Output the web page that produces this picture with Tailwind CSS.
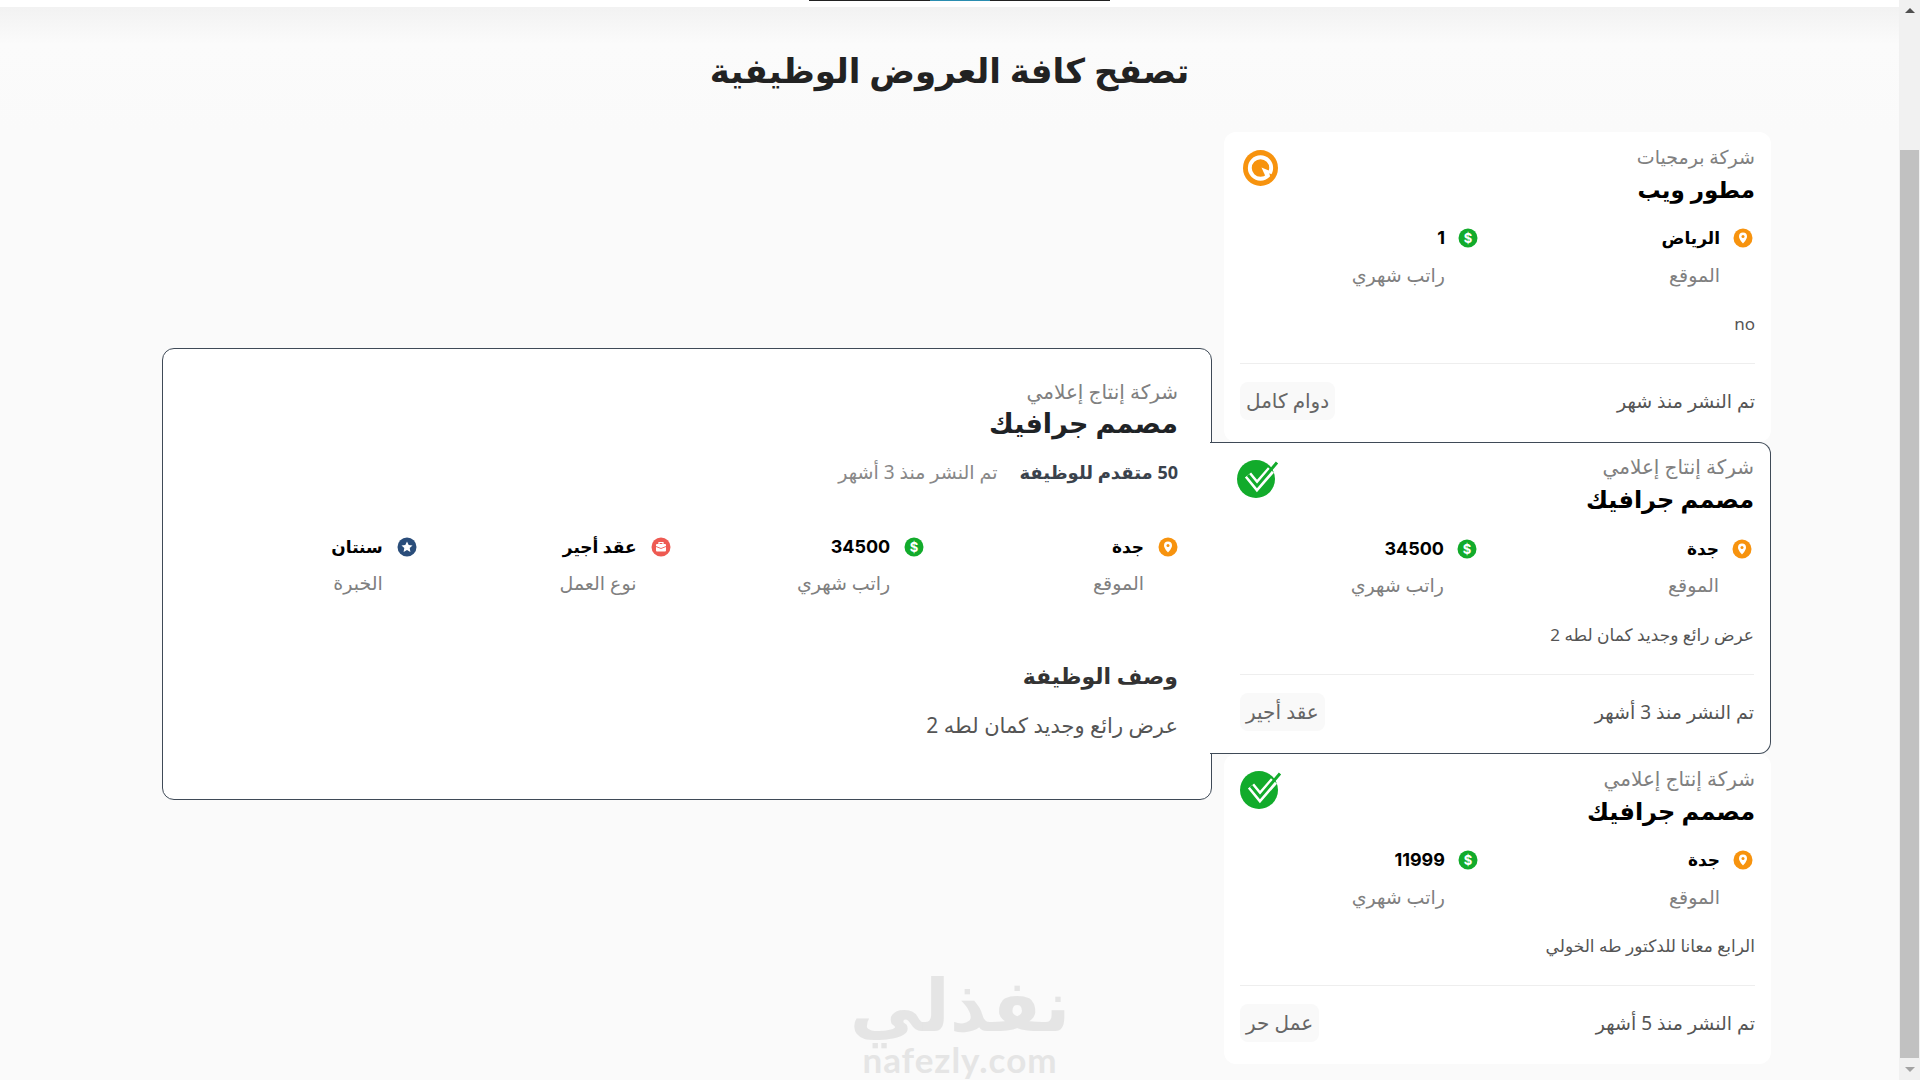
<!DOCTYPE html>
<html lang="ar" dir="rtl">
<head>
<meta charset="utf-8">
<script src="https://cdn.jsdelivr.net/npm/@tailwindcss/browser@4"></script>
</head>
<body class="m-0 h-[1080px] overflow-hidden bg-[#fafafa] font-['Noto_Sans','DejaVu_Sans',sans-serif]">
<div dir="ltr" class="flex h-[1080px] overflow-hidden">
  <div dir="rtl" class="relative flex h-[1080px] w-[1899px] flex-col overflow-hidden">
    <div class="relative h-[7px] shrink-0 bg-white">
      <div class="absolute left-[809px] top-0 flex h-px w-[301px]">
        <div class="flex-1 bg-[#222]"></div><div class="w-[60px] bg-[#2a8db0]"></div><div class="flex-1 bg-[#222]"></div>
      </div>
    </div>
    <div class="h-[125px] shrink-0 bg-gradient-to-b from-[#f2f2f2] via-[#fbfbfb] via-30% to-[#fafafa]">
      <h1 class="pt-[38px] text-center text-[34px] font-bold leading-[50px] text-[#222]">تصفح كافة العروض الوظيفية</h1>
    </div>

    <div class="absolute left-[760px] top-[967px] flex w-[400px] flex-col items-center text-[#e5e5e5]">
      <div class="h-[72px] text-[72px] font-bold leading-[72px]">نفذلي</div>
      <div dir="ltr" class="h-[40px] font-['Lato',sans-serif] text-[35px] font-bold leading-[40px] tracking-[1px]">nafezly.com</div>
    </div>

    <div class="relative flex flex-1 items-start">
      <!-- job cards column -->
      <div class="mr-[128px] flex w-[547px] shrink-0 flex-col">
        <!-- card 1 -->
        <div class="relative h-[310px] rounded-xl bg-white px-4 pt-[13px]">
          <div class="flex items-start justify-between">
            <div>
              <div class="text-[19px] leading-[24px] text-[#808080]">شركة برمجيات</div>
              <div class="mt-[2px] text-[23px] font-bold leading-[36px] text-black">مطور ويب</div>
            </div>
            <svg class="ml-[3px] mt-[5px] h-[36px] w-[35px]" viewBox="0 0 36 37"><ellipse cx="18" cy="18.5" rx="18" ry="18.5" fill="#f7930e"/><circle cx="18" cy="18.5" r="11" fill="none" stroke="#fff" stroke-width="4"/><path d="M19 18l10 4-5 7z" fill="#fff"/><path d="M27 24l5 2-3 5z" fill="#f7930e"/></svg>
          </div>
          <div class="mt-[18px] grid grid-cols-[275px_1fr] pr-[2px]">
            <div>
              <div class="flex items-center gap-[13px]">
                <svg class="h-5 w-5" viewBox="0 0 20 20"><circle cx="10" cy="10" r="9.5" fill="#f7930e"/><path d="M10 4.5a4 4 0 0 0-4 4c0 3 4 7 4 7s4-4 4-7a4 4 0 0 0-4-4z" fill="#fff"/><circle cx="10" cy="8.5" r="1.5" fill="#f7930e"/></svg>
                <span class="text-[17px] font-bold leading-[26px] text-black">الرياض</span>
              </div>
              <div class="mr-[33px] mt-[12px] text-[19px] leading-[24px] text-[#808080]">الموقع</div>
            </div>
            <div>
              <div class="flex items-center gap-[13px]">
                <svg class="h-5 w-5" viewBox="0 0 20 20"><circle cx="10" cy="10" r="9.5" fill="#12ab2b"/><text x="10" y="14.5" text-anchor="middle" font-size="13" font-weight="700" fill="#fff" font-family="Inter">$</text></svg>
                <span class="font-['Inter'] text-[18px] font-bold leading-[26px] text-black">1</span>
              </div>
              <div class="mr-[33px] mt-[12px] text-[19px] leading-[24px] text-[#808080]">راتب شهري</div>
            </div>
          </div>
          <div class="mt-[25px] text-[17px] leading-[24px] text-[#555]">no</div>
          <div class="mt-[27px] border-t border-[#eee]"></div>
          <div class="mt-[18px] flex items-center justify-between">
            <span class="text-[19px] leading-[24px] text-[#555]">تم النشر منذ شهر</span>
            <span class="flex h-[38px] items-center rounded-lg bg-[#f9f9f9] px-[6px] text-[20px] text-[#666]">دوام كامل</span>
          </div>
        </div>
        <!-- card 2 selected -->
        <div class="relative z-10 ml-[-14px] h-[312px] rounded-r-xl border border-l-0 border-[#3f4a57] bg-white pl-[30px] pr-4 pt-[12px]">
          <div class="flex items-start justify-between">
            <div>
              <div class="text-[20px] leading-[24px] text-[#808080]">شركة إنتاج إعلامي</div>
              <div class="mt-[2px] text-[24px] font-bold leading-[36px] text-black">مصمم جرافيك</div>
            </div>
            <svg class="ml-[-3px] mt-[5px] h-[38px] w-[42px]" viewBox="0 0 42 38"><circle cx="19" cy="19" r="19" fill="#12ab2b"/><path d="M11 15l9 11 14-16" fill="none" stroke="#fff" stroke-width="8"/><path d="M11 15l9 11L40 2.5" fill="none" stroke="#12ab2b" stroke-width="3"/></svg>
          </div>
          <div class="mt-[19px] grid grid-cols-[275px_1fr] pr-[2px]">
            <div>
              <div class="flex items-center gap-[13px]">
                <svg class="h-5 w-5" viewBox="0 0 20 20"><circle cx="10" cy="10" r="9.5" fill="#f7930e"/><path d="M10 4.5a4 4 0 0 0-4 4c0 3 4 7 4 7s4-4 4-7a4 4 0 0 0-4-4z" fill="#fff"/><circle cx="10" cy="8.5" r="1.5" fill="#f7930e"/></svg>
                <span class="text-[17px] font-bold leading-[26px] text-black">جدة</span>
              </div>
              <div class="mr-[33px] mt-[11px] text-[19px] leading-[24px] text-[#808080]">الموقع</div>
            </div>
            <div>
              <div class="flex items-center gap-[13px]">
                <svg class="h-5 w-5" viewBox="0 0 20 20"><circle cx="10" cy="10" r="9.5" fill="#12ab2b"/><text x="10" y="14.5" text-anchor="middle" font-size="13" font-weight="700" fill="#fff" font-family="Inter">$</text></svg>
                <span class="font-['Inter'] text-[18px] font-bold leading-[26px] text-black">34500</span>
              </div>
              <div class="mr-[33px] mt-[11px] text-[19px] leading-[24px] text-[#808080]">راتب شهري</div>
            </div>
          </div>
          <div class="mt-[26px] text-[17px] leading-[24px] text-[#555]">عرض رائع وجديد كمان لطه 2</div>
          <div class="mt-[27px] border-t border-[#eee]"></div>
          <div class="mt-[18px] flex items-center justify-between">
            <span class="text-[19px] leading-[24px] text-[#555]">تم النشر منذ 3 أشهر</span>
            <span class="flex h-[38px] items-center rounded-lg bg-[#f9f9f9] px-[6px] text-[20px] text-[#666]">عقد أجير</span>
          </div>
        </div>
        <!-- card 3 -->
        <div class="relative h-[310px] rounded-xl bg-white px-4 pt-[13px]">
          <div class="flex items-start justify-between">
            <div>
              <div class="text-[20px] leading-[24px] text-[#808080]">شركة إنتاج إعلامي</div>
              <div class="mt-[2px] text-[24px] font-bold leading-[36px] text-black">مصمم جرافيك</div>
            </div>
            <svg class="mt-[4px] h-[38px] w-[42px]" viewBox="0 0 42 38"><circle cx="19" cy="19" r="19" fill="#12ab2b"/><path d="M11 15l9 11 14-16" fill="none" stroke="#fff" stroke-width="8"/><path d="M11 15l9 11L40 2.5" fill="none" stroke="#12ab2b" stroke-width="3"/></svg>
          </div>
          <div class="mt-[18px] grid grid-cols-[275px_1fr] pr-[2px]">
            <div>
              <div class="flex items-center gap-[13px]">
                <svg class="h-5 w-5" viewBox="0 0 20 20"><circle cx="10" cy="10" r="9.5" fill="#f7930e"/><path d="M10 4.5a4 4 0 0 0-4 4c0 3 4 7 4 7s4-4 4-7a4 4 0 0 0-4-4z" fill="#fff"/><circle cx="10" cy="8.5" r="1.5" fill="#f7930e"/></svg>
                <span class="text-[17px] font-bold leading-[26px] text-black">جدة</span>
              </div>
              <div class="mr-[33px] mt-[12px] text-[19px] leading-[24px] text-[#808080]">الموقع</div>
            </div>
            <div>
              <div class="flex items-center gap-[13px]">
                <svg class="h-5 w-5" viewBox="0 0 20 20"><circle cx="10" cy="10" r="9.5" fill="#12ab2b"/><text x="10" y="14.5" text-anchor="middle" font-size="13" font-weight="700" fill="#fff" font-family="Inter">$</text></svg>
                <span class="font-['Inter'] text-[18px] font-bold leading-[26px] text-black">11999</span>
              </div>
              <div class="mr-[33px] mt-[12px] text-[19px] leading-[24px] text-[#808080]">راتب شهري</div>
            </div>
          </div>
          <div class="mt-[25px] text-[17px] leading-[24px] text-[#555]">الرابع معانا للدكتور طه الخولي</div>
          <div class="mt-[27px] border-t border-[#eee]"></div>
          <div class="mt-[18px] flex items-center justify-between">
            <span class="text-[19px] leading-[24px] text-[#555]">تم النشر منذ 5 أشهر</span>
            <span class="flex h-[38px] items-center rounded-lg bg-[#f9f9f9] px-[6px] text-[20px] text-[#666]">عمل حر</span>
          </div>
        </div>
      </div>

      <!-- detail panel -->
      <div class="mr-[12px] mt-[216px] h-[452px] w-[1050px] shrink-0 rounded-xl border border-[#3f4a57] bg-white pr-[33px] pt-[31px]">
        <div class="text-[20px] leading-[24px] text-[#808080]">شركة إنتاج إعلامي</div>
        <div class="text-[27px] font-bold leading-[38px] text-[#1f2326]">مصمم جرافيك</div>
        <div class="mt-[18px] flex items-center gap-[22px]">
          <span class="text-[18px] font-bold leading-[24px] text-[#3a424c]">50 متقدم للوظيفة</span>
          <span class="text-[19px] leading-[24px] text-[#888]">تم النشر منذ 3 أشهر</span>
        </div>
        <div class="mt-[50px] grid grid-cols-4">
          <div>
            <div class="flex items-center gap-[14px]">
              <svg class="h-5 w-5" viewBox="0 0 20 20"><circle cx="10" cy="10" r="9.5" fill="#f7930e"/><path d="M10 4.5a4 4 0 0 0-4 4c0 3 4 7 4 7s4-4 4-7a4 4 0 0 0-4-4z" fill="#fff"/><circle cx="10" cy="8.5" r="1.5" fill="#f7930e"/></svg>
              <span class="text-[17px] font-bold leading-[26px] text-black">جدة</span>
            </div>
            <div class="mr-[34px] mt-[11px] text-[19px] leading-[24px] text-[#808080]">الموقع</div>
          </div>
          <div>
            <div class="flex items-center gap-[14px]">
              <svg class="h-5 w-5" viewBox="0 0 20 20"><circle cx="10" cy="10" r="9.5" fill="#12ab2b"/><text x="10" y="14.5" text-anchor="middle" font-size="13" font-weight="700" fill="#fff" font-family="Inter">$</text></svg>
              <span class="font-['Inter'] text-[18px] font-bold leading-[26px] text-black">34500</span>
            </div>
            <div class="mr-[34px] mt-[11px] text-[19px] leading-[24px] text-[#808080]">راتب شهري</div>
          </div>
          <div>
            <div class="flex items-center gap-[14px]">
              <svg class="h-5 w-5" viewBox="0 0 20 20"><circle cx="10" cy="10" r="9.5" fill="#ee5a52"/><rect x="5" y="7" width="10" height="7.5" rx="1" fill="#fff"/><path d="M8 7V5.5h4V7" fill="none" stroke="#fff" stroke-width="1.2"/><path d="M5 9.5l5 2 5-2" fill="none" stroke="#ee5a52" stroke-width=".9"/></svg>
              <span class="text-[17px] font-bold leading-[26px] text-black">عقد أجير</span>
            </div>
            <div class="mr-[34px] mt-[11px] text-[19px] leading-[24px] text-[#808080]">نوع العمل</div>
          </div>
          <div>
            <div class="flex items-center gap-[14px]">
              <svg class="h-5 w-5" viewBox="0 0 20 20"><circle cx="10" cy="10" r="9.5" fill="#2a4d7a"/><path d="M10 4.5l1.7 3.5 3.8.5-2.8 2.6.7 3.8-3.4-1.9-3.4 1.9.7-3.8L4.5 8.5l3.8-.5z" fill="#fff"/></svg>
              <span class="text-[17px] font-bold leading-[26px] text-black">سنتان</span>
            </div>
            <div class="mr-[34px] mt-[11px] text-[19px] leading-[24px] text-[#808080]">الخبرة</div>
          </div>
        </div>
        <div class="mt-[65px] text-[22px] font-bold leading-[30px] text-[#333]">وصف الوظيفة</div>
        <div class="mt-[20px] text-[21px] leading-[30px] text-[#555]">عرض رائع وجديد كمان لطه 2</div>
      </div>
    </div>
  </div>
  <!-- scrollbar -->
  <div class="flex h-[1080px] w-[21px] shrink-0 flex-col items-center bg-[#f1f1f1]">
    <div class="flex h-[17px] w-full items-center justify-center pt-1"><div class="h-0 w-0 border-x-[5px] border-b-[5px] border-x-transparent border-b-[#505050]"></div></div>
    <div class="mt-[133px] h-[908px] w-[19px] bg-[#c1c1c1]"></div>
    <div class="flex h-[22px] w-full items-center justify-center"><div class="h-0 w-0 border-x-[5px] border-t-[5px] border-x-transparent border-t-[#a3a3a3]"></div></div>
  </div>
</div>
</body>
</html>
